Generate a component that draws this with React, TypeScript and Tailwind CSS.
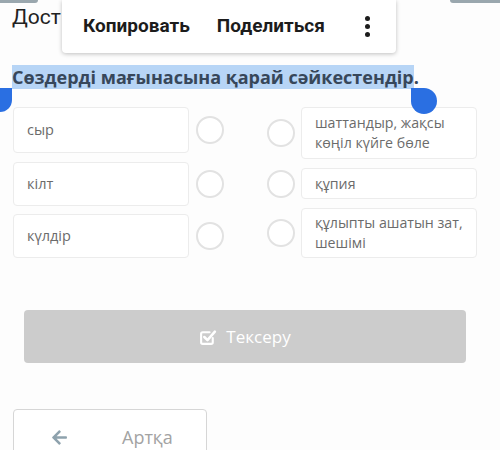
import { FaArrowLeft } from "react-icons/fa";

const leftItems = [
  { text: "сыр", h: "h-[46px]" },
  { text: "кілт", h: "h-[44px]" },
  { text: "күлдір", h: "h-[44px]" },
];

const rightItems = [
  { text: "шаттандыр, жақсы көңіл күйге бөле", h: "h-[52px]" },
  { text: "құпия", h: "h-[31px]" },
  { text: "құлыпты ашатын зат, шешімі", h: "h-[50px]" },
];

const Radio = () => (
  <div className="w-[28px] h-[28px] shrink-0 rounded-full border-2 border-[#e2e2e2] bg-white" />
);

const CheckIcon = () => (
  <svg width="18" height="18" viewBox="0 0 17 17" fill="none">
    <path
      d="M13 9.5V13.5C13 14.6 12.3 15 11.5 15H3.5C2.6 15 2 14.4 2 13.5V5.5C2 4.6 2.6 4 3.5 4H10"
      stroke="white"
      strokeWidth="2"
      strokeLinecap="round"
    />
    <path
      d="M5 8.5L8 11.5L15 3.5"
      stroke="white"
      strokeWidth="2.4"
      strokeLinecap="round"
      strokeLinejoin="round"
    />
  </svg>
);

export default function App() {
  return (
    <div className="relative w-[500px] h-[450px] overflow-hidden bg-[#fdfdfd] font-['Open_Sans',sans-serif]">
      {/* top bar remnants */}
      <div className="absolute left-0 top-0 w-[38px] h-[3px] rounded-br-[3px] bg-[#9aa7ae]" />
      <div className="absolute right-0 top-0 w-[50px] h-[3px] rounded-bl-[3px] bg-[#9aa7ae]" />

      <div className="h-[66px] pl-[12px] pt-[2px] text-[21px] leading-[30px] text-[#222] font-['Roboto',sans-serif]">
        Дост
      </div>

      <div className="pl-[12px] h-[23px] text-[18px] leading-[23px] font-bold text-[#37475a] whitespace-nowrap">
        <span className="bg-[#b7d5f6]">Сөздерді мағынасына қарай сәйкестендір</span>.
      </div>

      {/* matching columns */}
      <div className="flex mt-[18px] pl-[13px]">
        <div className="flex flex-col gap-[8px]">
          {leftItems.map((item, i) => (
            <div key={i} className={`flex items-center ${i === 0 ? "mb-[1px]" : ""}`}>
              <div
                className={`w-[176px] ${item.h} flex items-center pl-[13px] border border-[#ececec] rounded-[4px] bg-white text-[14.5px] text-[#6b6b6b]`}
              >
                {item.text}
              </div>
              <div className="ml-[7px]">
                <Radio />
              </div>
            </div>
          ))}
        </div>
        <div className="flex flex-col gap-[9px] ml-[43px]">
          {rightItems.map((item, i) => (
            <div key={i} className="flex items-center">
              <Radio />
              <div
                className={`ml-[6px] w-[176px] ${item.h} flex items-center pl-[13px] pr-[2px] border border-[#ececec] rounded-[4px] bg-white text-[14.2px] leading-[20px] text-[#6b6b6b]`}
              >
                {item.text}
              </div>
            </div>
          ))}
        </div>
      </div>

      <div className="pl-[24px] mt-[52px]">
        <div className="w-[442px] h-[53px] rounded-[4px] bg-[#cccccc] flex items-center justify-center gap-[9px] text-white text-[17px]">
          <CheckIcon />
          <span>Тексеру</span>
        </div>
      </div>

      <div className="pl-[13px] mt-[46px]">
        <div className="w-[194px] h-[60px] rounded-[4px] border border-[#d6d6d6] bg-white flex items-start pt-[15px]">
          <FaArrowLeft className="ml-[37px] mt-[4px] text-[#8ea2ad]" size={17} />
          <span className="ml-[54px] text-[18px] leading-[24px] text-[#a3a3a3]">Артқа</span>
        </div>
      </div>

      {/* text selection handles */}
      <div className="absolute left-[-12px] top-[88px] w-[24px] h-[24px] rounded-full rounded-tr-none bg-[#2a6fe2]" />
      <div className="absolute left-[411px] top-[88px] w-[26px] h-[26px] rounded-full rounded-tl-none bg-[#2a6fe2]" />

      {/* context menu */}
      <div className="absolute left-[62px] top-0 w-[334px] h-[53px] bg-white rounded-b-[4px] shadow-[0_1px_4px_rgba(0,0,0,0.25)] flex items-center font-['Roboto',sans-serif] font-bold text-[19px] text-[#1c1c1c]">
        <span className="ml-[21px]">Копировать</span>
        <span className="ml-[27px]">Поделиться</span>
        <div className="ml-[40px] flex flex-col gap-[3px]">
          <div className="w-[5px] h-[5px] rounded-full bg-[#1c1c1c]" />
          <div className="w-[5px] h-[5px] rounded-full bg-[#1c1c1c]" />
          <div className="w-[5px] h-[5px] rounded-full bg-[#1c1c1c]" />
        </div>
      </div>
    </div>
  );
}
